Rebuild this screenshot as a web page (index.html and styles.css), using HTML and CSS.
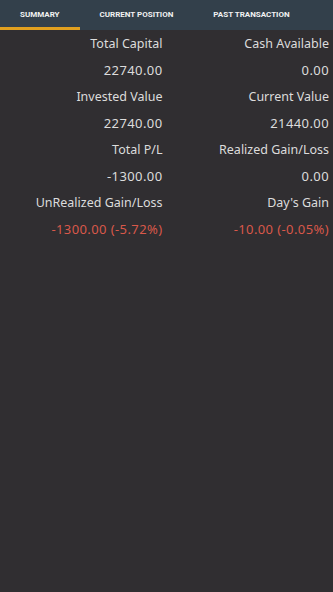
FILE: index.html
```html
<!DOCTYPE html>
<html>
<head>
<meta charset="utf-8">
<link rel="stylesheet" href="styles.css">
</head>
<body>
<div class="tabs">
  <div class="tab active">SUMMARY</div>
  <div class="tab">CURRENT POSITION</div>
  <div class="tab">PAST TRANSACTION</div>
</div>
<div class="grid">
  <div class="cell label">Total Capital</div>
  <div class="cell label">Cash Available</div>
  <div class="cell">22740.00</div>
  <div class="cell">0.00</div>
  <div class="cell label">Invested Value</div>
  <div class="cell label">Current Value</div>
  <div class="cell">22740.00</div>
  <div class="cell">21440.00</div>
  <div class="cell label">Total P/L</div>
  <div class="cell label">Realized Gain/Loss</div>
  <div class="cell">-1300.00</div>
  <div class="cell">0.00</div>
  <div class="cell label">UnRealized Gain/Loss</div>
  <div class="cell label">Day's Gain</div>
  <div class="cell neg">-1300.00 (-5.72%)</div>
  <div class="cell neg">-10.00 (-0.05%)</div>
</div>
</body>
</html>
```
FILE: styles.css
```css
html, body {
  margin: 0;
  padding: 0;
  background: #302e31;
  height: 100%;
}
body {
  font-family: "Noto Sans", "Open Sans", sans-serif;
  color: #dcdcdc;
}
.tabs {
  display: flex;
  height: 30px;
  background: #33404b;
}
.tab {
  padding: 1px 20px 0;
  font-family: Roboto, sans-serif;
  font-weight: bold;
  font-size: 8px;
  color: #f2f2f2;
  display: flex;
  align-items: center;
  justify-content: center;
  box-sizing: border-box;
  border-bottom: 3px solid transparent;
}
.tab.active {
  border-bottom-color: #e0a020;
}
.grid {
  display: grid;
  grid-template-columns: 1fr 1fr;
}
.cell {
  height: 26.5px;
  line-height: 26.5px;
  text-align: right;
  padding-right: 4px;
  font-size: 13px;
  letter-spacing: 0.4px;
  white-space: nowrap;
}
.cell.label {
  font-size: 12.5px;
  letter-spacing: 0;
  line-height: 28px;
}
.neg {
  color: #d9584a;
}
```
